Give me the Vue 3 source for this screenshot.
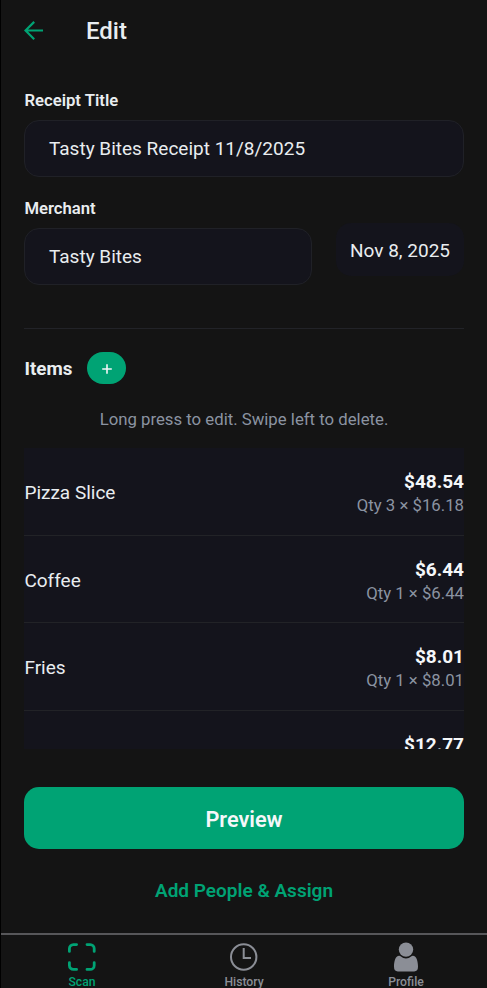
<script setup>
const items = [
  { name: 'Pizza Slice', total: '$48.54', detail: 'Qty 3 × $16.18' },
  { name: 'Coffee', total: '$6.44', detail: 'Qty 1 × $6.44' },
  { name: 'Fries', total: '$8.01', detail: 'Qty 1 × $8.01' },
  { name: 'Wings', total: '$12.77', detail: 'Qty 1 × $12.77' },
]
</script>

<template>
  <div class="screen">
    <header class="header">
      <svg class="back" width="20" height="20" viewBox="0 0 20 20" fill="none">
        <path d="M19 9.500H1.600M10.200.9L1.500 9.500l8.700 8.700" stroke="currentColor" stroke-width="2.2" />
      </svg>
      <h1 class="title">Edit</h1>
    </header>

    <main class="content">
      <label class="label">Receipt Title</label>
      <div class="field">Tasty Bites Receipt 11/8/2025</div>

      <label class="label merchant-label">Merchant</label>
      <div class="row">
        <div class="field merchant">Tasty Bites</div>
        <div class="date">Nov 8, 2025</div>
      </div>

      <div class="divider"></div>

      <div class="items-head">
        <h2 class="items-title">Items</h2>
        <button class="add" aria-label="Add item">
          <svg width="10" height="10" viewBox="0 0 10 10">
            <path d="M5 .2v9.6M.2 5h9.6" stroke="currentColor" stroke-width="1.6" />
          </svg>
        </button>
      </div>
      <p class="hint">Long press to edit. Swipe left to delete.</p>

      <div class="list">
        <div v-for="item in items" :key="item.name" class="item">
          <span class="name">{{ item.name }}</span>
          <div class="amounts">
            <span class="total">{{ item.total }}</span>
            <span class="detail">{{ item.detail }}</span>
          </div>
        </div>
      </div>

      <button class="preview">Preview</button>
      <button class="assign">Add People &amp; Assign</button>
    </main>

    <nav class="tabs">
      <div class="tab active">
        <svg width="30" height="30" viewBox="0 0 30 30" fill="none" stroke="currentColor" stroke-width="2.8" stroke-linecap="round">
          <path d="M2.400 9.400V6.600a4 4 0 0 1 4-4h3.200M20 2.600h3.200a4 4 0 0 1 4 4v2.800M27.200 20.600v2.800a4 4 0 0 1-4 4H20M9.600 27.400H6.400a4 4 0 0 1-4-4v-2.800" />
        </svg>
        <span>Scan</span>
      </div>
      <div class="tab">
        <svg width="30" height="30" viewBox="0 0 30 30" fill="none" stroke="currentColor" stroke-width="2">
          <circle cx="14.700" cy="15" r="12.700" />
          <path d="M14.700 6v10h7.300" />
        </svg>
        <span>History</span>
      </div>
      <div class="tab">
        <svg width="30" height="30" viewBox="0 0 30 30" fill="currentColor">
          <circle cx="15" cy="7.600" r="7.200" />
          <path d="M8.200 13.700q1 0 1.700.8a7.400 7.400 0 0 0 10.200 0q.7-.8 1.700-.8c3.800 0 5.200 5.800 5.200 11.100q0 4.600-3.800 4.600H6.800q-3.800 0-3.800-4.600c0-5.300 1.400-11.100 5.200-11.100z" />
        </svg>
        <span>Profile</span>
      </div>
    </nav>
  </div>
</template>

<style>
body {
  margin: 0;
  background: #141414;
}
</style>

<style scoped>
.screen {
  box-sizing: border-box;
  width: 487px;
  height: 988px;
  display: flex;
  flex-direction: column;
  overflow: hidden;
  border-left: 1px solid #000;
  background: #141414;
  color: #e9edf0;
  font-family: Roboto, sans-serif;
}
.header {
  display: flex;
  align-items: center;
  height: 62px;
  padding-left: 23px;
  gap: 42px;
}
.back { color: #00a374; }
.title {
  margin: 0;
  font-size: 24px;
  font-weight: 500;
  line-height: 30px;
}
.content {
  flex: 1;
  display: flex;
  flex-direction: column;
  padding: 28px 23px 0 23px;
}
.label {
  padding-left: 0.4px;
  font-size: 16.7px;
  font-weight: 600;
  line-height: 22px;
  margin-bottom: 8px;
}
.merchant-label { margin-top: 21px; }
.field {
  box-sizing: border-box;
  height: 57px;
  padding: 0 24px;
  border: 1px solid #202127;
  border-radius: 15px;
  background: #14141c;
  font-size: 19px;
  line-height: 56px;
}
.row {
  display: flex;
  gap: 24px;
}
.merchant { width: 288px; }
.date {
  flex: 1;
  height: 53px;
  margin-top: -5px;
  border-radius: 15px;
  background: #14141c;
  font-size: 19px;
  line-height: 55px;
  text-align: center;
}
.divider {
  height: 1px;
  margin-top: 43px;
  background: #222328;
}
.items-head {
  display: flex;
  align-items: center;
  gap: 15px;
  margin-top: 23px;
}
.items-title {
  margin: 0;
  padding: 1px 0 0 0.4px;
  font-size: 18.8px;
  font-weight: 700;
}
.add {
  display: flex;
  align-items: center;
  justify-content: center;
  width: 39px;
  height: 32px;
  padding: 2px 0 0;
  border: 0;
  border-radius: 16px;
  background: #00a374;
  color: #f2f5f7;
}
.hint {
  margin: 25px 0 0;
  font-size: 16.75px;
  line-height: 21px;
  text-align: center;
  color: #8b93a1;
}
.list {
  height: 301px;
  margin-top: 18px;
  overflow: hidden;
  background: #14141c;
}
.item {
  box-sizing: border-box;
  display: flex;
  align-items: center;
  justify-content: space-between;
  height: 87.7px;
  border-bottom: 1px solid #222327;
}
.name { font-size: 19px; padding: 2.5px 0 0 0.4px; }
.amounts {
  display: flex;
  flex-direction: column;
  align-items: flex-end;
  padding-top: 3px;
}
.total {
  font-size: 19px;
  font-weight: 700;
  line-height: 25px;
  color: #f5f7f9;
}
.detail {
  font-size: 16.75px;
  line-height: 23px;
  color: #8b93a1;
}
.preview {
  height: 62px;
  margin-top: 38px;
  padding: 3px 0 0;
  border: 0;
  border-radius: 15px;
  background: #00a374;
  color: #f5f7f9;
  font: 600 21.7px/59px Roboto, sans-serif;
}
.assign {
  margin-top: 30px;
  padding: 0;
  border: 0;
  background: none;
  color: #00a374;
  font: 600 19px/24px Roboto, sans-serif;
}
.tabs {
  box-sizing: border-box;
  display: flex;
  height: 55px;
  border-top: 2px solid #57575a;
}
.tab {
  flex: 1;
  display: flex;
  flex-direction: column;
  align-items: center;
  padding-top: 7px;
  color: #8b8e96;
  font-size: 12.2px;
  font-weight: 500;
  line-height: 16px;
}
.tab svg { flex: none; margin-bottom: 2px; }
.tab.active { color: #00a374; }
</style>
